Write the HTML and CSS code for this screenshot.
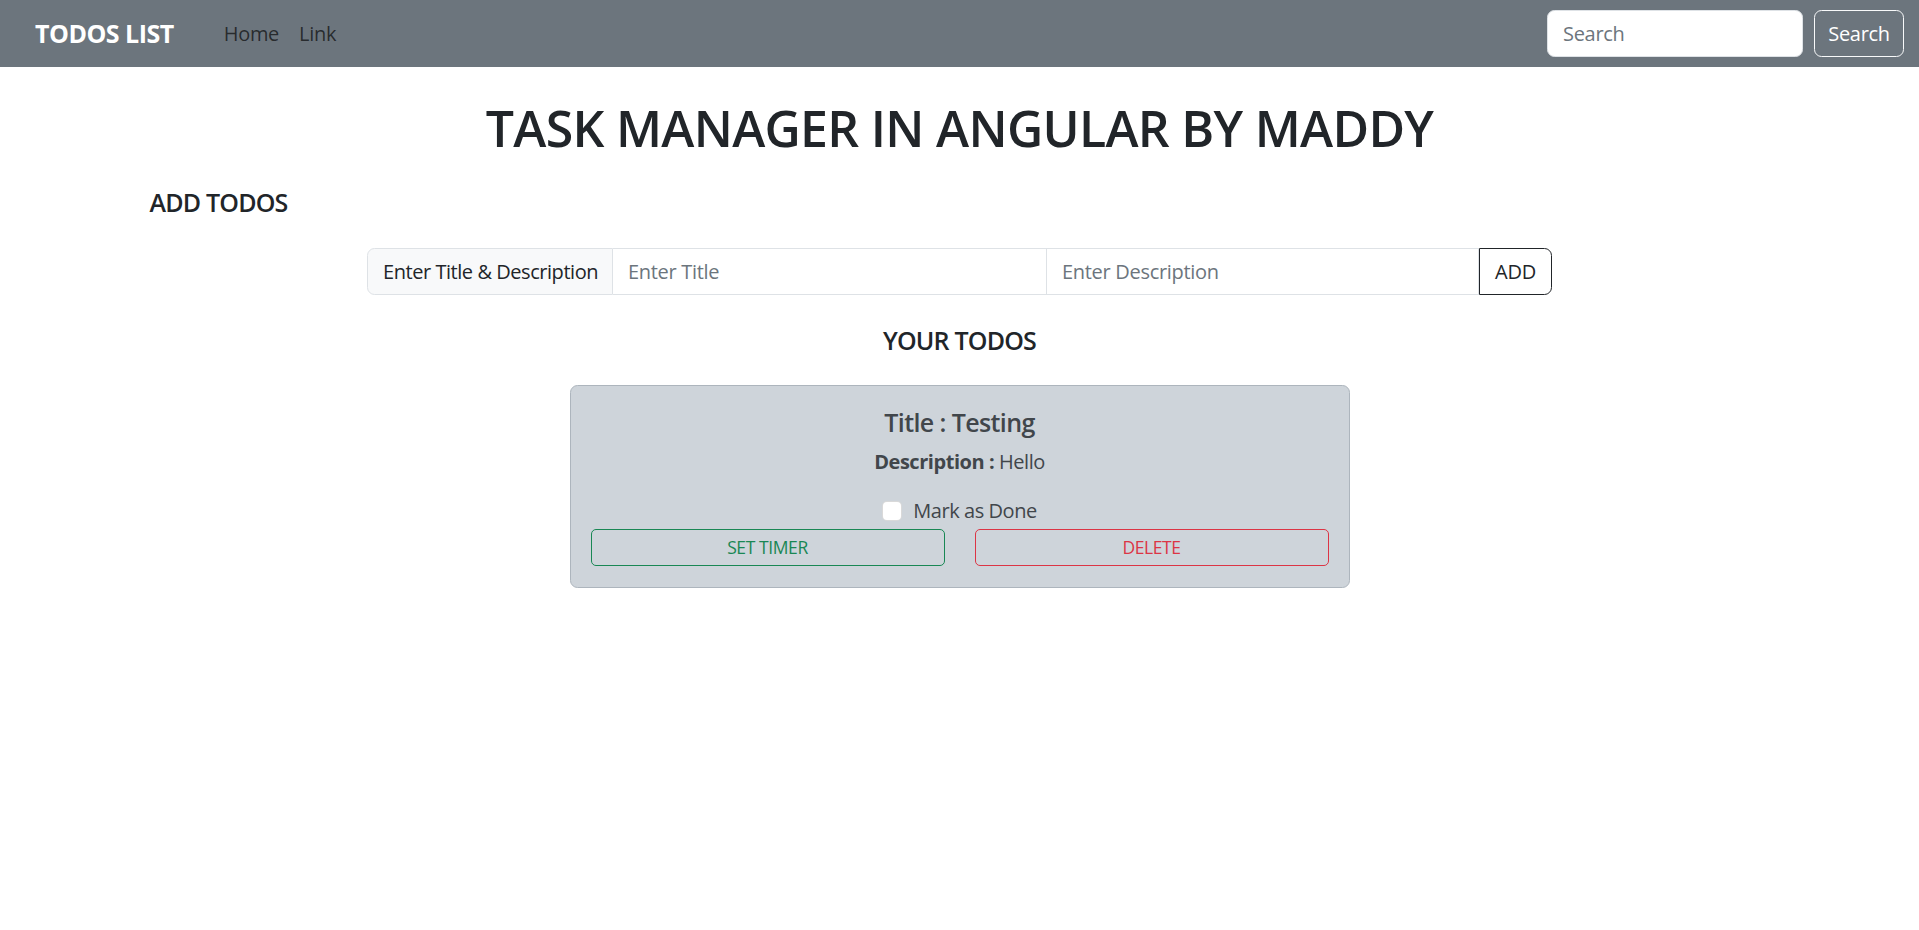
FILE: index.html
```html
<!DOCTYPE html>
<html lang="en">
<head>
<meta charset="utf-8">
<title>Todos List</title>
<link rel="stylesheet" href="styles.css">
</head>
<body>
<nav class="navbar">
  <div class="nav-left">
    <a class="brand" href="#">TODOS LIST</a>
    <ul class="nav-links">
      <li><a href="#" class="nav-link">Home</a></li>
      <li><a href="#" class="nav-link">Link</a></li>
    </ul>
  </div>
  <form class="search-form">
    <input class="search-input" type="search" placeholder="Search">
    <button class="search-btn" type="button">Search</button>
  </form>
</nav>

<main class="main">
  <h1 class="page-title">TASK MANAGER IN ANGULAR BY MADDY</h1>
  <div class="container">
    <h5 class="section-title">ADD TODOS</h5>
  </div>
  <form class="input-group">
    <span class="group-text">Enter Title &amp; Description</span>
    <input class="group-input first" type="text" placeholder="Enter Title">
    <input class="group-input second" type="text" placeholder="Enter Description">
    <button class="add-btn" type="button">ADD</button>
  </form>

  <h5 class="todos-title">YOUR TODOS</h5>

  <div class="card">
    <h5 class="card-title">Title : Testing</h5>
    <p class="card-text"><b>Description :</b> Hello</p>
    <div class="check-row">
      <label class="check"><span class="check-box"></span><span>Mark as Done</span></label>
    </div>
    <div class="card-actions">
      <button class="btn btn-success" type="button">SET TIMER</button>
      <button class="btn btn-danger" type="button">DELETE</button>
    </div>
  </div>
</main>
</body>
</html>
```

FILE: styles.css
```css
* { box-sizing: border-box; }

html, body {
  margin: 0;
  padding: 0;
  background: #fff;
}

body {
  font-family: "Open Sans", "Noto Sans", sans-serif;
  font-size: 20px;
  line-height: 1.5;
  color: #212529;
}

/* NAVBAR */
.navbar {
  height: 67px;
  background: #6c757d;
  display: flex;
  align-items: center;
  justify-content: space-between;
  padding: 0 15px 0 35px;
}

.nav-left {
  display: flex;
  align-items: center;
}

.brand {
  color: #fff;
  font-weight: 700;
  font-size: 25px;
  text-decoration: none;
  margin-right: 40px;
  letter-spacing: -0.5px;
}

.nav-links {
  display: flex;
  list-style: none;
  margin: 0;
  padding: 0;
}

.nav-link {
  display: block;
  padding: 10px 10px;
  color: rgba(0, 0, 0, 0.65);
  text-decoration: none;
  font-size: 20px;
  letter-spacing: -0.3px;
}

.search-form {
  display: flex;
  align-items: center;
  gap: 11px;
}

.search-input {
  width: 256px;
  height: 47px;
  border: 1px solid #dee2e6;
  border-radius: 7.5px;
  padding: 7px 15px;
  font: inherit;
  font-size: 20px;
  color: #212529;
  background: #fff;
  letter-spacing: -0.3px;
}

.search-input::placeholder { color: #6c757d; }

.search-btn {
  width: 90px;
  height: 47px;
  border: 1px solid #f8f9fa;
  border-radius: 7.5px;
  background: transparent;
  color: #fff;
  font: inherit;
  font-size: 20px;
  letter-spacing: -0.3px;
  padding: 0;
}

/* MAIN */
.main {
  display: flex;
  flex-direction: column;
  align-items: center;
}

.page-title {
  margin: 31px 0 0;
  font-size: 50px;
  font-weight: 600;
  line-height: 1.2;
  text-align: center;
  letter-spacing: -0.7px;
}

.container {
  width: 1650px;
  padding: 0 15px;
  align-self: center;
}

.section-title {
  margin: 29px 0 0;
  font-size: 25px;
  font-weight: 600;
  line-height: 1.2;
  letter-spacing: -0.8px;
}

.input-group {
  width: 1185px;
  height: 47px;
  margin-top: 31px;
  display: flex;
}

.group-text {
  width: 246px;
  display: flex;
  align-items: center;
  padding: 0 15px;
  background: #f8f9fa;
  border: 1px solid #dee2e6;
  border-radius: 7.5px 0 0 7.5px;
  color: #212529;
  white-space: nowrap;
  letter-spacing: -0.45px;
}

.group-input {
  height: 47px;
  border: 1px solid #dee2e6;
  border-left: none;
  padding: 7px 15px;
  font: inherit;
  font-size: 20px;
  color: #212529;
  background: #fff;
  letter-spacing: -0.3px;
}

.group-input.first { width: 434px; }
.group-input.second { width: 432px; }

.group-input::placeholder { color: #6c757d; }

.add-btn {
  width: 73px;
  height: 47px;
  border: 1px solid #212529;
  border-radius: 0 7.5px 7.5px 0;
  background: #fff;
  color: #212529;
  font: inherit;
  font-size: 20px;
  padding: 0;
  letter-spacing: -0.3px;
}

.todos-title {
  margin: 30px 0 0;
  font-size: 25px;
  font-weight: 600;
  line-height: 1.2;
  letter-spacing: -0.8px;
}

/* CARD */
.card {
  width: 780px;
  margin-top: 30px;
  background: #ced4da;
  border: 1px solid #adb5bd;
  border-radius: 7.5px;
  padding: 21px 20px 21px;
  text-align: center;
  color: #41464b;
}

.card-title {
  margin: 0;
  font-size: 25px;
  font-weight: 600;
  line-height: 1.2;
  letter-spacing: -0.6px;
}

.card-text {
  margin: 10px 0 0;
  font-size: 20px;
  letter-spacing: -0.45px;
}

.card-text b { font-weight: 700; }

.check-row {
  margin-top: 19px;
  display: flex;
  justify-content: center;
}

.check {
  display: flex;
  align-items: center;
  gap: 11px;
  letter-spacing: -0.45px;
}

.check-box {
  width: 20px;
  height: 20px;
  background: #fff;
  border: 1px solid rgba(0, 0, 0, 0.15);
  border-radius: 5px;
}

.card-actions {
  display: grid;
  grid-template-columns: 1fr 1fr;
  gap: 30px;
  margin-top: 3px;
}

.btn {
  height: 37px;
  background: transparent;
  border-radius: 5px;
  font: inherit;
  font-size: 17.5px;
  padding: 0;
  letter-spacing: -0.4px;
}

.btn-success {
  border: 1px solid #198754;
  color: #198754;
}

.btn-danger {
  border: 1px solid #dc3545;
  color: #dc3545;
}
```
